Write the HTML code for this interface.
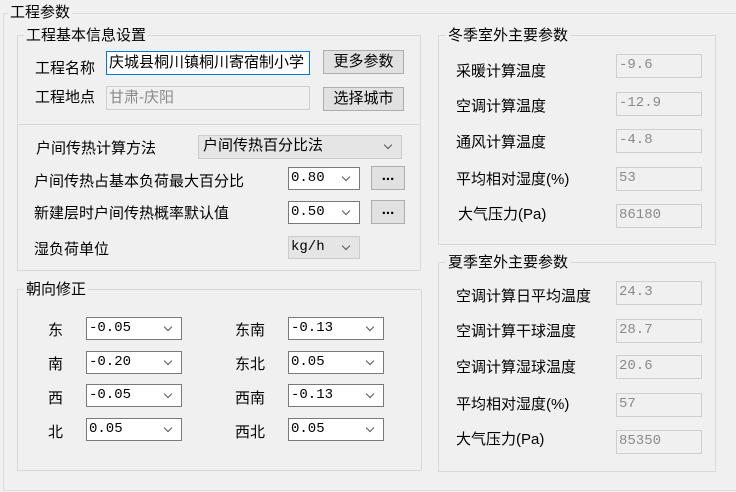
<!DOCTYPE html>
<html><head><meta charset="utf-8"><style>
body{margin:0;width:736px;height:492px;background:#f0f0f0;position:relative;overflow:hidden;font-family:"Liberation Sans","Noto Sans CJK SC",sans-serif;font-size:15px;color:#000}
.a{position:absolute}
.g{position:absolute;border:1px solid #d9d9d9;box-sizing:border-box}
.t{position:absolute;background:#f0f0f0;padding:0 2px;font-size:15px;line-height:16px}
.in{position:absolute;box-sizing:border-box;border:1px solid #7a7a7a;background:#fff;font-family:"Liberation Mono","Noto Sans CJK SC",monospace;font-size:14px;line-height:20px;padding-left:2px;white-space:nowrap;overflow:hidden}
.dis{border-color:#cfcfcf;background:#f0f0f0;color:#8a8a8a}
.cb::after{content:"";position:absolute;right:10px;top:6px;width:5px;height:5px;border-right:1px solid #555;border-bottom:1px solid #555;transform:rotate(45deg)}
.gray{background:#e5e5e5;border-color:#cccccc}
.btn{position:absolute;box-sizing:border-box;border:1px solid #adadad;background:#e1e1e1;text-align:center;line-height:21px;font-size:15px}
.l{position:absolute;font-size:15px;line-height:16px;white-space:nowrap}
</style></head><body>
<div class="g" style="left:3px;top:13px;width:740px;height:478px;border-color:#dcdcdc"></div>
<div class="t" style="left:8px;top:5px">工程参数</div>

<div class="g" style="left:17px;top:35px;width:404px;height:236px"></div>
<div class="a" style="left:17px;top:124px;width:404px;height:1px;background:#d9d9d9"></div>
<div class="t" style="left:24px;top:28px">工程基本信息设置</div>
<div class="l" style="left:35px;top:61px">工程名称</div>
<div class="in" style="left:106px;top:51px;width:204px;height:24px;border-color:#0078d7;font-family:'Liberation Sans','Noto Sans CJK SC',sans-serif;font-size:15px;line-height:22px">庆城县桐川镇桐川寄宿制小学</div>
<div class="btn" style="left:323px;top:50px;width:81px;height:24px">更多参数</div>
<div class="l" style="left:35px;top:90px">工程地点</div>
<div class="in dis" style="left:106px;top:86px;width:204px;height:24px;font-family:'Liberation Sans','Noto Sans CJK SC',sans-serif;font-size:15px;line-height:22px">甘肃-庆阳</div>
<div class="btn" style="left:323px;top:87px;width:81px;height:24px">选择城市</div>

<div class="l" style="left:36px;top:141px">户间传热计算方法</div>
<div class="in cb gray" style="left:198px;top:135px;width:204px;height:24px;font-family:'Liberation Sans','Noto Sans CJK SC',sans-serif;font-size:15px;padding-left:4px">户间传热百分比法</div>
<div class="l" style="left:34px;top:174px">户间传热占基本负荷最大百分比</div>
<div class="in cb" style="left:288px;top:167px;width:72px;height:23px">0.80</div>
<div class="btn" style="left:371px;top:166px;width:34px;height:24px;line-height:18px;font-weight:bold">...</div>
<div class="l" style="left:34px;top:206px">新建层时户间传热概率默认值</div>
<div class="in cb" style="left:288px;top:201px;width:72px;height:23px">0.50</div>
<div class="btn" style="left:371px;top:200px;width:34px;height:24px;line-height:18px;font-weight:bold">...</div>
<div class="l" style="left:34px;top:242px">湿负荷单位</div>
<div class="in cb gray" style="left:288px;top:236px;width:72px;height:23px">kg/h</div>

<div class="g" style="left:17px;top:289px;width:405px;height:182px"></div>
<div class="t" style="left:24px;top:282px">朝向修正</div>
<div class="l" style="left:48px;top:323px">东</div>
<div class="l" style="left:48px;top:357px">南</div>
<div class="l" style="left:48px;top:391px">西</div>
<div class="l" style="left:48px;top:425px">北</div>
<div class="in cb" style="left:86px;top:317px;width:96px;height:23px">-0.05</div>
<div class="in cb" style="left:86px;top:351px;width:96px;height:23px">-0.20</div>
<div class="in cb" style="left:86px;top:384px;width:96px;height:23px">-0.05</div>
<div class="in cb" style="left:86px;top:418px;width:96px;height:23px">0.05</div>
<div class="l" style="left:235px;top:323px">东南</div>
<div class="l" style="left:235px;top:357px">东北</div>
<div class="l" style="left:235px;top:391px">西南</div>
<div class="l" style="left:235px;top:425px">西北</div>
<div class="in cb" style="left:288px;top:317px;width:96px;height:23px">-0.13</div>
<div class="in cb" style="left:288px;top:351px;width:96px;height:23px">0.05</div>
<div class="in cb" style="left:288px;top:384px;width:96px;height:23px">-0.13</div>
<div class="in cb" style="left:288px;top:418px;width:96px;height:23px">0.05</div>

<div class="g" style="left:438px;top:35px;width:278px;height:210px"></div>
<div class="t" style="left:446px;top:28px">冬季室外主要参数</div>
<div class="l" style="left:456px;top:64px">采暖计算温度</div>
<div class="l" style="left:456px;top:99px">空调计算温度</div>
<div class="l" style="left:456px;top:135px">通风计算温度</div>
<div class="l" style="left:456px;top:172px">平均相对湿度(%)</div>
<div class="l" style="left:458px;top:207px">大气压力(Pa)</div>
<div class="in dis" style="left:616px;top:54px;width:86px;height:24px">-9.6</div>
<div class="in dis" style="left:616px;top:92px;width:86px;height:24px">-12.9</div>
<div class="in dis" style="left:616px;top:129px;width:86px;height:24px">-4.8</div>
<div class="in dis" style="left:616px;top:167px;width:86px;height:24px">53</div>
<div class="in dis" style="left:616px;top:204px;width:86px;height:24px">86180</div>

<div class="g" style="left:438px;top:262px;width:278px;height:210px"></div>
<div class="t" style="left:446px;top:255px">夏季室外主要参数</div>
<div class="l" style="left:456px;top:289px">空调计算日平均温度</div>
<div class="l" style="left:456px;top:324px">空调计算干球温度</div>
<div class="l" style="left:456px;top:360px">空调计算湿球温度</div>
<div class="l" style="left:456px;top:397px">平均相对湿度(%)</div>
<div class="l" style="left:456px;top:432px">大气压力(Pa)</div>
<div class="in dis" style="left:616px;top:281px;width:86px;height:24px">24.3</div>
<div class="in dis" style="left:616px;top:319px;width:86px;height:24px">28.7</div>
<div class="in dis" style="left:616px;top:355px;width:86px;height:24px">20.6</div>
<div class="in dis" style="left:616px;top:393px;width:86px;height:24px">57</div>
<div class="in dis" style="left:616px;top:430px;width:86px;height:24px">85350</div>
</body></html>
